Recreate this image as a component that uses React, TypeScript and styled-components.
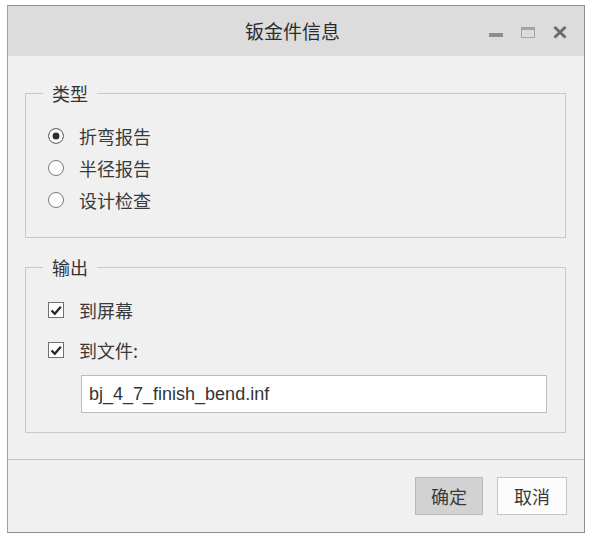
import React from "react";
import styled, { createGlobalStyle } from "styled-components";

const GlobalStyle = createGlobalStyle`
  html, body { margin: 0; padding: 0; background: #ffffff; }
  body { font-family: "Noto Sans CJK SC", "Liberation Sans", sans-serif; }
  * { box-sizing: border-box; }
`;

const Page = styled.div`
  padding: 5px 0 0 7px;
`;

const Window = styled.div`
  width: 578px;
  border: 1px solid #a2a2a2;
  border-top-color: #969696;
  border-right-color: #8e8e8e;
  border-bottom-color: #8e8e8e;
  background: #f0f0f0;
  display: flex;
  flex-direction: column;
`;

const TitleBar = styled.div`
  height: 50px;
  background: #dcdcdc;
  display: grid;
  grid-template-columns: 1fr auto 1fr;
  align-items: center;
  padding: 0 17px;
`;

const Title = styled.div`
  grid-column: 2;
  font-size: 19px;
  line-height: 24px;
  color: #2c2c2c;
  padding-right: 7px;
`;

const Controls = styled.div`
  grid-column: 3;
  justify-self: end;
  display: flex;
  gap: 18px;
  align-items: center;
  margin-top: 2px;
`;

const Content = styled.div`
  padding: 25px 18px 26px 17px;
  display: flex;
  flex-direction: column;
  gap: 17px;
`;

const Group = styled.fieldset`
  margin: 0;
  padding: 0;
  min-width: 0;
  border: 1px solid #c9c9c9;
`;

const Legend = styled.legend`
  margin-left: 17px;
  padding: 0 9px;
  font-size: 18px;
  line-height: 24px;
  color: #333333;
`;

const Options = styled.div<{ $bottom: number }>`
  display: flex;
  flex-direction: column;
  padding: 15px 18px ${(p) => p.$bottom}px 22px;
`;

const Row = styled.label<{ $gap?: number }>`
  height: 32px;
  display: flex;
  align-items: center;
  gap: 15px;
  margin-bottom: ${(p) => p.$gap ?? 0}px;
  font-size: 18px;
  color: #3a3a3a;
`;

const Radio = styled.input.attrs({ type: "radio" })`
  appearance: none;
  flex: none;
  margin: 0;
  width: 16px;
  height: 16px;
  border-radius: 50%;
  border: 1px solid #7c7c7c;
  background: #ffffff;
  &:checked {
    background: #2e2e2e;
    box-shadow: inset 0 0 0 3.5px #ffffff;
  }
`;

const CheckBox = styled.span`
  flex: none;
  width: 16px;
  height: 16px;
  border: 1px solid #707070;
  background: #ffffff;
  display: flex;
  align-items: center;
  justify-content: center;
`;

const FileInput = styled.input`
  margin: 9px 0 0 33px;
  height: 38px;
  border: 1px solid #bcbcbc;
  background: #ffffff;
  padding: 0 7px;
  font-family: "Liberation Sans", "Noto Sans CJK SC", sans-serif;
  font-size: 18px;
  color: #333333;
  outline: none;
`;

const Footer = styled.div`
  border-top: 1px solid #c6c6c6;
  padding: 17px 17px 17px 0;
  display: flex;
  justify-content: flex-end;
  gap: 14px;
`;

const Button = styled.button<{ $primary?: boolean }>`
  height: 38px;
  width: ${(p) => (p.$primary ? 68 : 70)}px;
  border: 1px solid ${(p) => (p.$primary ? "#b9b9b9" : "#c4c4c4")};
  background: ${(p) => (p.$primary ? "#d2d2d2" : "#fcfcfc")};
  font-family: "Noto Sans CJK SC", sans-serif;
  font-size: 18px;
  color: #3a3a3a;
  padding: 0;
`;

const Check = () => (
  <svg width="12" height="11" viewBox="0 0 12 11">
    <path d="M1.5 5.5 L4.8 8.8 L10.8 1.8" fill="none" stroke="#2a2a2a" strokeWidth="2.4" />
  </svg>
);

const MinIcon = () => (
  <svg width="14" height="14" viewBox="0 0 14 14">
    <rect x="0" y="8" width="14" height="4" fill="#8c8c8c" />
  </svg>
);

const MaxIcon = () => (
  <svg width="14" height="14" viewBox="0 0 14 14">
    <rect x="0.5" y="2.5" width="13" height="10" fill="none" stroke="#a4a4a4" />
    <rect x="0" y="2" width="14" height="3" fill="#a4a4a4" />
  </svg>
);

const CloseIcon = () => (
  <svg width="14" height="14" viewBox="0 0 14 14">
    <path d="M1.5 2 L12.5 12.5 M12.5 2 L1.5 12.5" stroke="#6c6c6c" strokeWidth="3" />
  </svg>
);

export default function App() {
  return (
    <>
      <GlobalStyle />
      <Page>
        <Window>
          <TitleBar>
            <Title>钣金件信息</Title>
            <Controls>
              <MinIcon />
              <MaxIcon />
              <CloseIcon />
            </Controls>
          </TitleBar>
          <Content>
            <Group>
              <Legend>类型</Legend>
              <Options $bottom={21}>
                <Row>
                  <Radio name="type" defaultChecked />
                  折弯报告
                </Row>
                <Row>
                  <Radio name="type" />
                  半径报告
                </Row>
                <Row>
                  <Radio name="type" />
                  设计检查
                </Row>
              </Options>
            </Group>
            <Group>
              <Legend>输出</Legend>
              <Options $bottom={19}>
                <Row $gap={8}>
                  <CheckBox>
                    <Check />
                  </CheckBox>
                  到屏幕
                </Row>
                <Row>
                  <CheckBox>
                    <Check />
                  </CheckBox>
                  到文件:
                </Row>
                <FileInput defaultValue="bj_4_7_finish_bend.inf" />
              </Options>
            </Group>
          </Content>
          <Footer>
            <Button $primary>确定</Button>
            <Button>取消</Button>
          </Footer>
        </Window>
      </Page>
    </>
  );
}
